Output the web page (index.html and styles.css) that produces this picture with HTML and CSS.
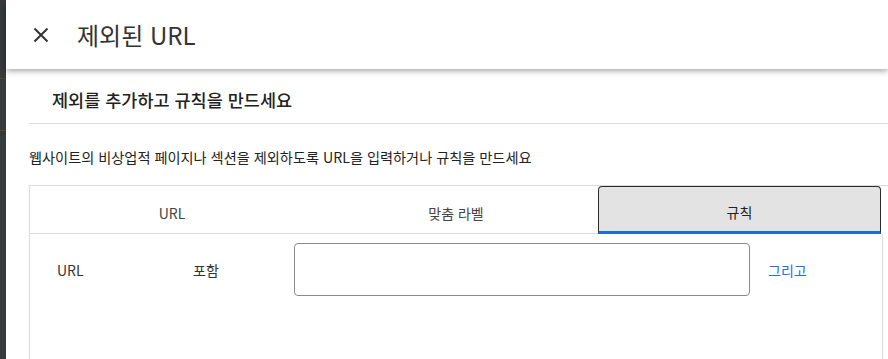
FILE: index.html
```html
<!DOCTYPE html>
<html lang="ko">
<head>
<meta charset="utf-8">
<title>제외된 URL</title>
<link rel="stylesheet" href="styles.css">
</head>
<body>
<div class="app">
  <div class="rail">
    <span class="rail-mark rail-mark-1"></span>
    <span class="rail-mark rail-mark-2"></span>
  </div>
  <div class="main">
    <header class="topbar">
      <button class="close-btn" aria-label="닫기">
        <svg width="16" height="16" viewBox="0 0 16 16"><path d="M1.5 1.5 L14.5 14.5 M14.5 1.5 L1.5 14.5" stroke="#333" stroke-width="2" fill="none"/></svg>
      </button>
      <h1 class="title">제외된 URL</h1>
    </header>
    <section class="content">
      <h2 class="section-title">제외를 추가하고 규칙을 만드세요</h2>
      <p class="desc">웹사이트의 비상업적 페이지나 섹션을 제외하도록 URL을 입력하거나 규칙을 만드세요</p>
      <div class="tabs-box">
        <div class="tabs">
          <div class="tab">URL</div>
          <div class="tab">맞춤 라벨</div>
          <div class="tab tab-active">규칙</div>
        </div>
        <div class="panel">
          <div class="rule-row">
            <span class="rule-field">URL</span>
            <span class="rule-op">포함</span>
            <input class="rule-input" type="text">
            <a class="rule-and" href="#">그리고</a>
          </div>
        </div>
      </div>
    </section>
  </div>
</div>
</body>
</html>
```
FILE: styles.css
```css
* { box-sizing: border-box; }
html, body { margin: 0; padding: 0; height: 100%; }
body {
  font-family: "Noto Sans CJK KR", "Noto Sans", sans-serif;
  color: #222;
  background: #fff;
  overflow: hidden;
}
.app { display: flex; height: 359px; }
.rail {
  width: 6px;
  flex: none;
  background: #38393c;
  display: flex;
  flex-direction: column;
}
.rail-mark { display: block; height: 1px; background: #5a4636; }
.rail-mark-1 { margin-top: 78px; }
.rail-mark-2 { margin-top: 51px; }
.main { flex: 1; min-width: 0; display: flex; flex-direction: column; }
.topbar {
  flex: none;
  height: 69px;
  display: flex;
  align-items: center;
  padding-left: 27px;
  box-shadow: 0 2px 6px rgba(0,0,0,0.35);
  position: relative;
  z-index: 1;
  background: #fff;
}
.close-btn {
  border: 0;
  background: none;
  padding: 0;
  width: 16px;
  height: 16px;
  display: flex;
  margin-right: 28px;
}
.title {
  margin: 0;
  font-size: 24px;
  font-weight: 400;
  color: #333;
  line-height: 30px;
}
.content { flex: none; padding-left: 23px; }
.section-title {
  margin: 0;
  padding: 19px 0 11px 23px;
  font-size: 17.5px;
  font-weight: 500;
  line-height: 24px;
  color: #222;
  border-bottom: 1px solid #dcdcdc;
}
.desc {
  margin: 23px 0 18px;
  font-size: 14.2px;
  line-height: 20px;
  color: #222;
}
.tabs-box {
  border-top: 1px solid #dcdcdc;
  border-left: 1px solid #dcdcdc;
  height: 174px;
}
.tabs {
  display: grid;
  grid-template-columns: 284px 284px 283px;
  width: 851px;
  border-bottom: 1px solid #dcdcdc;
  height: 48px;
}
.tab {
  display: flex;
  align-items: center;
  justify-content: center;
  padding-top: 7px;
  font-size: 14px;
  color: #444;
}
.tab-active {
  background: #e3e3e3;
  border: 1px solid #2b2b2b;
  border-bottom: 3px solid #1a6fd6;
  border-radius: 4px 4px 0 0;
  margin-bottom: -1px;
  padding-top: 5px;
  color: #222;
}
.panel {
  width: 853px;
  height: 125px;
  border-right: 1px solid #dcdcdc;
  padding: 9px 0 0 27px;
}
.rule-row { display: flex; align-items: center; }
.rule-field { width: 136px; font-size: 14px; color: #333; }
.rule-op { width: 101px; font-size: 14px; color: #333; }
.rule-input {
  width: 456px;
  height: 53px;
  border: 1px solid #8a8a8a;
  border-radius: 4px;
  outline: none;
  background: #fff;
  margin: 0;
}
.rule-and {
  margin-left: 18px;
  font-size: 14px;
  color: #1a73e8;
  text-decoration: none;
}
```
